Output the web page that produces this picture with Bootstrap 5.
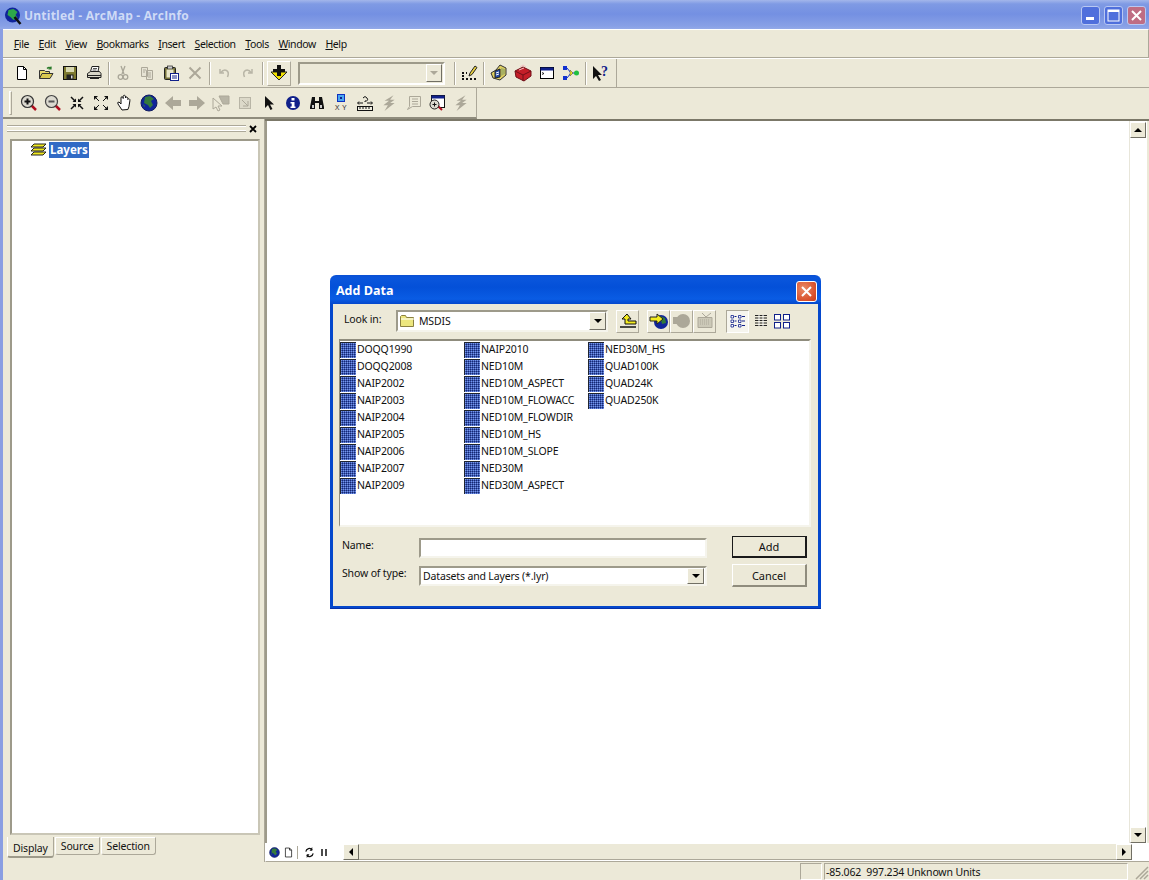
<!DOCTYPE html>
<html lang="en">
<head>
<meta charset="UTF-8">
<title>Untitled - ArcMap - ArcInfo</title>
<link rel="stylesheet" href="https://cdn.jsdelivr.net/npm/bootstrap@5.3.2/dist/css/bootstrap.min.css">
<style>
html, body { height: 880px; overflow: hidden; }
body { margin: 0; background: #ece9d8; color: #111; font-family: "Noto Sans", "Liberation Sans", sans-serif; font-size: 10.5px; letter-spacing: -.15px; line-height: 1; }
svg { display: block; }
.app { width: 1149px; height: 880px; position: relative; }

.titlebar { height: 29px; padding: 2px 3px 0 4px; background: linear-gradient(#a3b6ea 0, #7f9ae4 4px, #7490e2 14px, #88a0e6 26px, #93a9e8 29px); }
.app-title { color: #cfdbf6; font-family: "Open Sans", "Liberation Sans", sans-serif; font-weight: 700; font-size: 12px; letter-spacing: .2px; margin-left: 2px; white-space: nowrap; }
.win-btn { width: 19px; height: 19px; margin-left: 4px; border: 1px solid #b9c8f2; border-radius: 3px; background: #4f6fdc; }
.win-btn.close-btn { background: #bf6d84; }

.frame { height: 851px; border-left: 3px solid #8a9ee2; background: #ece9d8; }
.menubar { height: 29px; padding: 2px 0 0 6px; border-top: 1px solid #fff; border-bottom: 1px solid #aca899; border-right: 1px solid #aca899; }
.menubar .nav-link { color: #111; padding: 0 4.8px; font-size: 10.5px; letter-spacing: -.4px; white-space: nowrap; }
.toolbar { height: 30px; border-top: 1px solid #fff; border-bottom: 1px solid #aca899; }
.tb-first { width: 614px; border-right: 1px solid #aca899; padding-left: 7px; }
.tb-second { height: 31px; width: 474px; border-right: 1px solid #aca899; padding-left: 3px; border-bottom: 2px solid #8f8c7d; }
.grip { width: 3px; height: 24px; border: 1px solid #fff; border-right-color: #aca899; border-bottom-color: #aca899; }
.grip-wide { margin-left: 3px; margin-right: 5px; }
.tool { width: 24px; height: 24px; flex: none; }
.tool-raised { width: 24px; height: 25px; flex: none; margin-left: 2px; border: 1px solid #fff; border-right-color: #aca899; border-bottom-color: #aca899; }
.xy-label { font-size: 7.5px; letter-spacing: .5px; margin-top: 2px; color: #333; }
.sep { width: 1px; height: 23px; flex: none; background: #aca899; box-shadow: 1px 0 #fff; margin: 0 2px; }
.sep.sep-wide { margin-right: 3px; }
.combo { width: 147px; height: 23px; border: 2px solid #9d9a8a; border-right-color: #fff; border-bottom-color: #fff; background: #ece9d8; margin: 0 7px; flex: none; }
.arrow-btn { background: #ece9d8; border: 1px solid #fff; border-right-color: #716f64; border-bottom-color: #716f64; flex: none; }
.combo .arrow-btn { width: 16px; height: 18px; margin: 1px; }
.arrow-down { width: 0; height: 0; border-left: 4px solid transparent; border-right: 4px solid transparent; border-top: 4px solid #000; }
.arrow-down.off { border-top-color: #aca899; }
.arrow-up { width: 0; height: 0; border-left: 4px solid transparent; border-right: 4px solid transparent; border-bottom: 4px solid #000; }
.arrow-left { width: 0; height: 0; border-top: 4px solid transparent; border-bottom: 4px solid transparent; border-right: 4px solid #000; }
.arrow-right { width: 0; height: 0; border-top: 4px solid transparent; border-bottom: 4px solid transparent; border-left: 4px solid #000; }

.main { height: 743px; }
.toc { width: 262px; flex: none; border-right: 1px solid #aca899; padding: 4px 4px 0 7px; }
.toc-head { height: 11px; }
.toc-grips { height: 7px; border-top: 1px solid #aca899; border-bottom: 1px solid #aca899; box-shadow: inset 0 1px #fff, inset 0 -1px #fff; margin-left: -3px; }
.toc-x { width: 14px; flex: none; }
.toc-tree { height: 696px; margin-top: 5px; background: #fff; border: 2px solid #9d9a8a; border-right-color: #c9c6b6; border-bottom-color: #c9c6b6; padding: 1px 0 0 18px; }
.toc-sel { background: #316ac5; color: #fff; font-weight: 700; padding: 2px 1px; font-size: 11.5px; letter-spacing: 0; margin-left: 1px; }
.toc-tab { border: 1px solid #aca899; border-top-color: #fff; border-left-color: #fff; border-radius: 0 0 3px 3px; padding: 3px 5px 4px; height: 18px; margin-right: 1px; white-space: nowrap; background: #ece9d8; }
.toc-tab.on { height: 21px; padding: 6px 5px 4px; border-top: 0; border-bottom: 2px solid #9d9a8a; }
.toc-tabs { margin: 2px 0 0 -3px; }

.mapwrap { width: 884px; flex: none; }
.mapview { height: 724px; border-top: 2px solid #7b7868; }
.map { width: 864px; background: #fff; border-left: 2px solid #9d9a8a; }
.vscroll { width: 18px; background: #fff; border-left: 1px solid #e8e6da; padding-top: 1px; }
.sbtn { width: 16px; height: 16px; background: #ece9d8; border: 1px solid #fff; border-right-color: #716f64; border-bottom-color: #716f64; flex: none; }
.vspace { flex: 1; }
.mapbottom { height: 19px; background: #fff; border-left: 1px solid #fff; border-bottom: 1px solid #aca899; }
.viewicons { width: 77px; padding-left: 3px; flex: none; }
.viewicons svg { flex: none; }
.viewicons .sep { height: 13px; margin: 0 6px 0 3px; }
.view-gap { margin-left: 3px; }
.view-pause { margin-left: 5px; }
.hthumb { flex: 1; height: 16px; background: #ece9d8; border-bottom: 1px solid #aca899; }
.hcorner { width: 17px; flex: none; }

.statusbar { height: 18px; }
.st-cell { height: 17px; border: 1px solid #aca899; border-right-color: #fff; border-bottom-color: #fff; margin-right: 2px; white-space: nowrap; }
.st-empty { width: 22px; }
.st-coord { width: 304px; padding: 2px 0 0 1px; }
.sizer { width: 19px; height: 17px; flex: none; }

.dlg { position: absolute; left: 330px; top: 275px; width: 491px; height: 334px; border-radius: 6px 6px 0 0; background: linear-gradient(#0a50d4 0, #0a56dc 3px, #0450d8 12px, #0a5ce4 24px, #0548cc 29px); padding: 0 3px 3px; box-shadow: inset 0 -1px #0831a9; }
.dlg-title { height: 29px; padding: 3px 1px 0 3px; }
.dlg-name { color: #fff; font-weight: 700; font-size: 12.5px; letter-spacing: 0; margin-top: 1px; font-family: "Open Sans", "Liberation Sans", sans-serif; }
.dlg-close { width: 21px; height: 21px; border: 1px solid #fff; border-radius: 3px; background: radial-gradient(circle at 35% 35%, #ea8a66, #d8502c 70%, #c63e1c); }
.dlg-body { height: 302px; background: #ece9d8; padding: 5px 7px 0 6px; }
.look-row { height: 24px; }
.look-label { width: 57px; padding: 0 0 3px 5px; flex: none; }
.look-combo { width: 212px; height: 22px; background: #fff; border: 2px solid #9d9a8a; border-right-color: #f5f4ec; border-bottom-color: #f5f4ec; padding-left: 1px; flex: none; }
.look-combo .arrow-btn, .type-combo .arrow-btn { width: 17px; height: 18px; margin-left: auto; }
.dlg-tool { width: 23px; height: 23px; flex: none; border: 1px solid #fff; border-right-color: #aca899; border-bottom-color: #aca899; }
.dlg-tool.flat { border-color: transparent; }
.dlg-tool.on { background: #f6f5ee; border-color: #aca899 #fff #fff #aca899; margin-left: 10px; }
.dlg-tool.last { margin-left: -2px; }
.files { height: 188px; margin-top: 6px; background: #fff; border: 2px solid #8f8c7d; border-left-width: 1px; border-right-color: #f5f4ec; border-bottom-color: #f5f4ec; }
.file-col { width: 124px; flex: none; }
.file-item { height: 17px; white-space: nowrap; }
.file-item svg { margin-right: 1px; flex: none; }
.form-row-xp { height: 20px; }
.form-label-xp { width: 80px; flex: none; margin: 0 0 6px; padding-left: 3px; }
.dlg-body .form-control { width: 288px; height: 20px; flex: none; min-height: 0; padding: 0; background: #fff; border-radius: 0; border: 2px solid #9d9a8a; border-right-color: #f5f4ec; border-bottom-color: #f5f4ec; }
.type-combo { width: 288px; height: 20px; background: #fff; border: 2px solid #9d9a8a; border-right-color: #f5f4ec; border-bottom-color: #f5f4ec; padding-left: 2px; flex: none; white-space: nowrap; }
.type-combo .arrow-btn { height: 16px; margin-right: 1px; }
.dlg .btn { width: 75px; padding: 0; font-size: 11px; letter-spacing: 0; font-family: "Noto Sans", "Liberation Sans", sans-serif; color: #111; background: #ece9d8; border-radius: 0; line-height: 1; }
.btn-def { height: 22px; border: 2px solid #1a1a1a; border-top-width: 1px; border-left-width: 1px; }
.btn-xp { height: 23px; border: 1px solid #fff; border-right: 2px solid #8f8c7d; border-bottom: 2px solid #8f8c7d; }
.lower { margin-top: 9px; }
.lower-left { width: 390px; flex: none; padding-top: 2px; }
.lower-right { gap: 6px; margin-right: 4px; }
</style>
</head>
<body>

<svg width="0" height="0" class="position-absolute">
  <defs>
    <pattern id="rasterDots" width="2" height="2" patternUnits="userSpaceOnUse">
      <rect width="2" height="2" fill="#3a58b8"/><rect width="1" height="1" fill="#1a2a6c"/><rect x="1" y="1" width="1" height="1" fill="#7a98e4"/>
    </pattern>
    <symbol id="i-raster" viewBox="0 0 16 16"><rect width="16" height="16" fill="url(#rasterDots)"/><path d="M.5 16V.5H16" fill="none" stroke="#20242e"/></symbol>
    <symbol id="i-new" viewBox="0 0 16 16"><path d="M3.500 1.500h6l3 3v10h-9z" fill="#fff" stroke="#000"/><path d="M9.500 1.500v3h3" fill="none" stroke="#000"/></symbol>
    <symbol id="i-open" viewBox="0 0 16 16"><path d="M1.500 13.500v-8h5l1 1h4v2" fill="#e6d96a" stroke="#333"/><path d="M1.500 13.500l2.500-5h11l-3 5z" fill="#d8c850" stroke="#333"/><path d="M9 3.500q2-2 4 0M13 1.500v2.500h-2.500" fill="none" stroke="#2a7a2a" stroke-width="1.200"/></symbol>
    <symbol id="i-save" viewBox="0 0 16 16"><rect x="1.500" y="1.500" width="13" height="13" fill="#7e7a30" stroke="#111"/><rect x="4" y="2" width="8" height="5" fill="#d8d8b0"/><rect x="4.500" y="9.500" width="7" height="5" fill="#222"/><rect x="9" y="10.500" width="1.500" height="3" fill="#ddd"/></symbol>
    <symbol id="i-print" viewBox="0 0 16 16"><path d="M4.500 6.500l1.500-5h7l-1 5" fill="#fff" stroke="#222"/><path d="M1.500 8.500l3-2h9l1.500 2v4h-13.500z" fill="#d8d6c8" stroke="#222"/><path d="M2 10.500h13M4 13.500h9" stroke="#222"/><path d="M7 3.500h4M6.500 5h4" stroke="#555"/></symbol>
    <symbol id="i-cut" viewBox="0 0 16 16"><path d="M6 1l3 8M10 1l-3 8" stroke="#a9a698" fill="none" stroke-width="1.300"/><circle cx="5.500" cy="12" r="2.300" fill="none" stroke="#a9a698" stroke-width="1.300"/><circle cx="10.500" cy="12" r="2.300" fill="none" stroke="#a9a698" stroke-width="1.300"/></symbol>
    <symbol id="i-copy" viewBox="0 0 16 16"><path d="M2.500 2.500h6v9h-6zM7.500 5.500h6v9h-6z" fill="#e6e3d4" stroke="#aca899"/><path d="M9 8h3M9 10h3M9 12h3M4 5h3M4 7h2" stroke="#aca899"/></symbol>
    <symbol id="i-paste" viewBox="0 0 16 16"><rect x="1.500" y="2.500" width="11" height="12" rx="1" fill="#75713a" stroke="#222"/><rect x="4.500" y="1" width="5" height="3" fill="#ccc" stroke="#222" stroke-width=".7"/><rect x="3.500" y="4.500" width="7" height="8" fill="#e8e6c8"/><rect x="7.500" y="8.500" width="8" height="7" fill="#fff" stroke="#10208a"/><path d="M9 11h5M9 13h5" stroke="#10208a"/></symbol>
    <symbol id="i-del" viewBox="0 0 16 16"><path d="M2.500 2.500l11 11M13.500 2.500l-11 11" stroke="#aca899" stroke-width="2"/></symbol>
    <symbol id="i-undo" viewBox="0 0 16 16"><path d="M4 4v4h4M4.500 8q3-4 6-2.500t1 6.500" fill="none" stroke="#b8b5a6" stroke-width="1.500"/></symbol>
    <symbol id="i-redo" viewBox="0 0 16 16"><path d="M12 4v4h-4M11.500 8q-3-4-6-2.500t-1 6.500" fill="none" stroke="#b8b5a6" stroke-width="1.500"/></symbol>
    <symbol id="i-add" viewBox="0 0 18 18"><path d="M1 8h16l-8 8z" fill="#f2e200" stroke="#222"/><path d="M7 1h4v4h4v3h-4v4h-4v-4h-4v-3h4z" fill="#111"/></symbol>
    <symbol id="i-edit" viewBox="0 0 18 18"><path d="M9 12l1-3 5-7 2 1.500-5 7z" fill="#e8d040" stroke="#222"/><path d="M2 9h2M6 9h1M2 15h14M3 11v3" stroke="#111" stroke-width="2" stroke-dasharray="2 2"/></symbol>
    <symbol id="i-catalog" viewBox="0 0 18 18"><path d="M1 9l5-3 4-5 6 3v7l-6 5-7-2z" fill="#e0d060" stroke="#333"/><path d="M5 7l5-2v8l-5 1z" fill="#2850a8" stroke="#222"/><path d="M11 4l4 1v5l-4 2z" fill="#a8b060"/><path d="M6 9l3-1M6 11l3-1" stroke="#fff"/></symbol>
    <symbol id="i-toolbox" viewBox="0 0 18 18"><path d="M1 7l8-4 8 4v5l-7 5-8-4z" fill="#c41e28" stroke="#701018"/><path d="M1 7l8 4 8-4M9 11v6" stroke="#701018" fill="none"/><path d="M5 6l5-2M6 3l3-2 3 2" stroke="#f2c0c0" fill="none"/></symbol>
    <symbol id="i-window" viewBox="0 0 16 16"><rect x="1.500" y="2.500" width="13" height="11" fill="#fff" stroke="#000"/><rect x="1.500" y="2.500" width="13" height="3" fill="#10208a"/><path d="M3 7.500l2 1-2 1" fill="none" stroke="#000" stroke-width=".8"/></symbol>
    <symbol id="i-model" viewBox="0 0 18 18"><rect x="1" y="2" width="4" height="4" fill="#1030d0"/><rect x="1" y="12" width="4" height="4" fill="#1030d0"/><path d="M5 4l4 5M5 14l4-5M9 9h4" stroke="#1030d0"/><path d="M8 6l3 3-3 3z" fill="#f0e020" stroke="#444" stroke-width=".5"/><circle cx="14.500" cy="9" r="2.500" fill="#20c040"/></symbol>
    <symbol id="i-whats" viewBox="0 0 18 18"><path d="M1 2v13l3-3 3 5 2-1-3-5h4z" fill="#111"/><text x="9" y="12" font-family="Liberation Serif, serif" font-weight="700" font-size="14" fill="#10208a">?</text></symbol>
    <symbol id="i-zin" viewBox="0 0 18 18"><path d="M11 11l5 5" stroke="#b01020" stroke-width="2.500"/><circle cx="7.500" cy="7.500" r="6" fill="#dcdad0" stroke="#333" stroke-width="1.200"/><path d="M4.500 7.500h6M7.500 4.500v6" stroke="#111" stroke-width="2"/></symbol>
    <symbol id="i-zout" viewBox="0 0 18 18"><path d="M11 11l5 5" stroke="#b01020" stroke-width="2.500"/><circle cx="7.500" cy="7.500" r="6" fill="#dcdad0" stroke="#444" stroke-width="1.200"/><path d="M4.500 7.500h6" stroke="#555" stroke-width="2"/></symbol>
    <symbol id="i-fin" viewBox="0 0 16 16"><path d="M2 2l4 4M14 2l-4 4M2 14l4-4M14 14l-4-4" stroke="#111" stroke-width="1.500"/><path d="M7 7H3.500L7 3.500zM9 7h3.500L9 3.500zM7 9H3.500L7 12.500zM9 9h3.500L9 12.500z" fill="#111"/></symbol>
    <symbol id="i-fout" viewBox="0 0 16 16"><path d="M1 1h4L1 5zM15 1h-4l4 4zM1 15h4l-4-4zM15 15h-4l4-4z" fill="#111"/><path d="M3 3l3 3M13 3l-3 3M3 13l3-3M13 13l-3-3" stroke="#111"/></symbol>
    <symbol id="i-hand" viewBox="0 0 18 18"><path d="M6 16l-4-6q-1-2 1-2l2 2V4q0-1.500 1.200-1.200 1 .2 1 1.700V2.500q.2-1.500 1.300-1.200 1 .2 1 1.700v1q.3-1.300 1.300-1 1 .3 1 1.500v1q.5-1 1.300-.7 1 .4.800 2l-1 6-1 2.700z" fill="#fff" stroke="#111"/></symbol>
    <symbol id="i-globe" viewBox="0 0 18 18"><circle cx="9" cy="9" r="8" fill="#10249a"/><path d="M5 3l5-1 4 3-3 2 2 4-3 3-2-3-4-2z" fill="#357a3c"/><path d="M3 10l2 2-1 1z" fill="#357a3c"/><circle cx="9" cy="9" r="8" fill="none" stroke="#101c60"/></symbol>
    <symbol id="i-back" viewBox="0 0 18 18"><path d="M1 9l8-7v4h8v6H9v4z" fill="#aca899"/></symbol>
    <symbol id="i-fwd" viewBox="0 0 18 18"><path d="M17 9l-8-7v4H1v6h8v4z" fill="#aca899"/></symbol>
    <symbol id="i-selfeat" viewBox="0 0 18 18"><path d="M7 2h10v8H11z" fill="#b8b5a6" stroke="#aca899"/><path d="M1 4v11l3-2 2 4 2-1-2-4h4z" fill="#ece9d8" stroke="#aca899"/></symbol>
    <symbol id="i-clear" viewBox="0 0 16 16"><rect x="2.500" y="2.500" width="11" height="11" fill="#dcd9c9" stroke="#b8b5a6"/><path d="M5 5l6 6M11 6v5h-5" fill="none" stroke="#aca899"/></symbol>
    <symbol id="i-arrow" viewBox="0 0 16 16"><path d="M4 1v12l3-3 2.500 5 2-1-2.500-4.500h4z" fill="#111"/></symbol>
    <symbol id="i-info" viewBox="0 0 16 16"><circle cx="8" cy="8" r="7" fill="#10208a"/><rect x="6.500" y="3" width="3" height="2.500" fill="#fff"/><path d="M5.500 7h4v4.500h1v1.500h-5v-1.500h1.200v-3h-1.200z" fill="#fff"/></symbol>
    <symbol id="i-find" viewBox="0 0 16 16"><path d="M3 2h3v4h4V2h3l2 10v2H10V8H6v6H1v-2z" fill="#111"/><rect x="3" y="10" width="2" height="3" fill="#ccc"/><rect x="11" y="10" width="2" height="3" fill="#ccc"/></symbol>
    <symbol id="i-measure" viewBox="0 0 18 18"><rect x="1.500" y="12.500" width="15" height="4" fill="#f0eee0" stroke="#111"/><path d="M4 13v2M7 13v2M10 13v2M13 13v2M2 9h5M16 9h-5M3 7.500L1.500 9 3 10.500M15 7.500L16.500 9 15 10.500" stroke="#111" fill="none"/><path d="M7 4q2-3 4 0t-2 3v1" fill="none" stroke="#111"/></symbol>
    <symbol id="i-bolt" viewBox="0 0 16 16"><path d="M12 1L4 6h4L3 10h4l-3 5 9-7H9l4-3H9z" fill="#aca899"/></symbol>
    <symbol id="i-note" viewBox="0 0 18 18"><path d="M5.500 2.500h11v10h-8l-5 3 2-3z" fill="#ece9d8" stroke="#aca899"/><path d="M8 5h6M8 7.500h6M8 10h6" stroke="#aca899"/></symbol>
    <symbol id="i-viewer" viewBox="0 0 18 18"><rect x="3.500" y="1.500" width="13" height="12" fill="#fff" stroke="#111"/><rect x="3.500" y="1.500" width="13" height="3" fill="#10208a"/><path d="M9 11l5 5" stroke="#b01020" stroke-width="2"/><circle cx="6.500" cy="10.500" r="4.500" fill="#dcdad0" stroke="#222"/><path d="M4.500 10.500h4M6.500 8.500v4" stroke="#111"/></symbol>
    <symbol id="i-layers" viewBox="0 0 18 14"><path d="M4 1h12l-3 3H1zM4 5h12l-3 3H1zM4 9h12l-3 3H1z" fill="#f0e820" stroke="#222"/></symbol>
    <symbol id="i-folder" viewBox="0 0 16 16"><path d="M1.500 13.500v-10l1-1h4l1 2h7v9z" fill="#ece67e" stroke="#8a8040"/><path d="M2 6h13" stroke="#fff"/></symbol>
    <symbol id="i-up" viewBox="0 0 18 18"><path d="M8 2L3 7h3v5h11v-3H9V7h3z" fill="#f4ec20" stroke="#111"/><path d="M1 15h16" stroke="#111" stroke-width="1.500"/></symbol>
    <symbol id="i-connect" viewBox="0 0 20 18"><circle cx="12" cy="10" r="7" fill="#10249a"/><path d="M11 4l5 2 1 5-4 1z" fill="#2f7a3a"/><path d="M1 5h7V2l6 5-6 5V9H1z" fill="#f4ec20" stroke="#222"/></symbol>
    <symbol id="i-disc" viewBox="0 0 20 18"><circle cx="11" cy="9" r="7" fill="#aca899"/><rect x="1" y="5" width="7" height="7" fill="#aca899"/></symbol>
    <symbol id="i-dbconn" viewBox="0 0 20 18"><path d="M3 5.500h14v10H3z" fill="#ccc9b8" stroke="#aca899"/><path d="M7 1l4 4 5-4" stroke="#aca899" fill="none"/><path d="M5 8h10M5 10h10M5 12h10" stroke="#aca899" stroke-dasharray="1 1"/></symbol>
    <symbol id="i-list" viewBox="0 0 18 18"><path d="M2 3.500h2.500v2.500H2zM2 8h2.500v2.500H2zM2 12.500h2.500V15H2zM9.500 3.500H12v2.500H9.500zM9.500 8H12v2.500H9.500zM9.500 12.500H12V15H9.500z" fill="#fff" stroke="#10208a" stroke-width=".8"/><path d="M5.500 4.500h2M5.500 9h2M5.500 13.500h2M13 4.500h3M13 9h3M13 13.500h3" stroke="#10208a"/></symbol>
    <symbol id="i-details" viewBox="0 0 18 18"><path d="M3 3.500h12M3 6h12M3 8.500h12M3 11h12M3 13.500h12" stroke="#222"/><path d="M7 3v11M11 3v11" stroke="#fff"/></symbol>
    <symbol id="i-thumbs" viewBox="0 0 18 18"><rect x="1.500" y="2.500" width="6" height="5.500" fill="#fff" stroke="#10208a"/><rect x="10.500" y="2.500" width="6" height="5.500" fill="#fff" stroke="#10208a"/><rect x="1.500" y="10.500" width="6" height="5.500" fill="#fff" stroke="#10208a"/><rect x="10.500" y="10.500" width="6" height="5.500" fill="#fff" stroke="#10208a"/></symbol>
    <symbol id="i-refresh" viewBox="0 0 12 12"><path d="M2 5a4 4 0 0 1 7-2M10 7a4 4 0 0 1-7 2" fill="none" stroke="#111" stroke-width="1.300"/><path d="M9 0v4H6M3 12V8h3" fill="#111"/></symbol>
  </defs>
</svg>

<div class="app">
  <div class="titlebar d-flex align-items-center">
    <svg width="18" height="18" viewBox="0 0 17 18"><circle cx="8" cy="8" r="7.500" fill="#10249a"/><path d="M4 3l5-1 4 3-2 3 2 3-4 2-3-3-3-2z" fill="#2ea84a"/><path d="M10 10l6 7" stroke="#111" stroke-width="2.500"/></svg>
    <span class="app-title">Untitled - ArcMap - ArcInfo</span>
    <div class="ms-auto d-flex">
      <div class="win-btn d-flex align-items-end justify-content-center pb-1"><svg width="9" height="3"><rect width="8" height="3" fill="#fff"/></svg></div>
      <div class="win-btn d-flex align-items-center justify-content-center"><svg width="13" height="13"><rect x="1" y="1" width="11" height="11" fill="none" stroke="#fff"/><rect x="1" y="1" width="11" height="2" fill="#fff"/></svg></div>
      <div class="win-btn close-btn d-flex align-items-center justify-content-center"><svg width="13" height="13"><path d="M2 2l9 9M11 2l-9 9" stroke="#fff" stroke-width="2"/></svg></div>
    </div>
  </div>

  <div class="frame">
    <div class="menubar d-flex align-items-center">
      <nav class="nav flex-nowrap">
        <a class="nav-link" href="#"><u>F</u>ile</a>
        <a class="nav-link" href="#"><u>E</u>dit</a>
        <a class="nav-link" href="#"><u>V</u>iew</a>
        <a class="nav-link" href="#"><u>B</u>ookmarks</a>
        <a class="nav-link" href="#"><u>I</u>nsert</a>
        <a class="nav-link" href="#"><u>S</u>election</a>
        <a class="nav-link" href="#"><u>T</u>ools</a>
        <a class="nav-link" href="#"><u>W</u>indow</a>
        <a class="nav-link" href="#"><u>H</u>elp</a>
      </nav>
    </div>

    <div class="toolbar"><div class="tb-first d-flex align-items-center h-100" id="tb1"></div></div>
    <div class="tb-second d-flex align-items-center" id="tb2"></div>

    <div class="main d-flex">
      <div class="toc d-flex flex-column">
        <div class="toc-head d-flex align-items-center">
          <div class="toc-grips flex-grow-1"></div>
          <div class="toc-x d-flex justify-content-center"><svg width="8" height="8"><path d="M1 1l6 6M7 1l-6 6" stroke="#000" stroke-width="1.800"/></svg></div>
        </div>
        <div class="toc-tree">
          <div class="d-flex align-items-center">
            <svg width="18" height="14"><use href="#i-layers"/></svg>
            <span class="toc-sel">Layers</span>
          </div>
        </div>
        <div class="toc-tabs d-flex align-items-start">
          <div class="toc-tab on">Display</div>
          <div class="toc-tab">Source</div>
          <div class="toc-tab">Selection</div>
        </div>
      </div>

      <div class="mapwrap d-flex flex-column">
        <div class="mapview d-flex">
          <div class="map"></div>
          <div class="vscroll d-flex flex-column">
            <div class="sbtn d-flex align-items-center justify-content-center"><div class="arrow-up"></div></div>
            <div class="vspace"></div>
            <div class="sbtn d-flex align-items-center justify-content-center"><div class="arrow-down"></div></div>
          </div>
        </div>
        <div class="mapbottom d-flex align-items-center">
          <div class="viewicons d-flex align-items-center">
            <svg width="11" height="11"><use href="#i-globe"/></svg>
            <svg width="11" height="11" class="view-gap"><use href="#i-new"/></svg>
            <div class="sep"></div>
            <svg width="11" height="11"><use href="#i-refresh"/></svg>
            <svg width="9" height="9" class="view-pause"><path d="M2 1v7M6 1v7" stroke="#111" stroke-width="1.500"/></svg>
          </div>
          <div class="sbtn d-flex align-items-center justify-content-center"><div class="arrow-left"></div></div>
          <div class="hthumb"></div>
          <div class="sbtn d-flex align-items-center justify-content-center"><div class="arrow-right"></div></div>
          <div class="hcorner"></div>
        </div>
      </div>
    </div>

    <div class="statusbar d-flex justify-content-end align-items-end">
      <div class="st-cell st-empty"></div>
      <div class="st-cell st-coord d-flex align-items-center">-85.062&nbsp; 997.234 Unknown Units</div>
      <svg class="sizer" viewBox="0 0 19 17"><path d="M18 4L6 16M18 8l-8 8M18 12l-4 4" stroke="#aca899" stroke-width="1.500"/></svg>
    </div>
  </div>

  <div class="dlg" role="dialog">
    <div class="dlg-title d-flex align-items-center justify-content-between">
      <span class="dlg-name">Add Data</span>
      <div class="dlg-close d-flex align-items-center justify-content-center"><svg width="13" height="13"><path d="M2 2l9 9M11 2l-9 9" stroke="#fff" stroke-width="2"/></svg></div>
    </div>
    <div class="dlg-body">
      <div class="look-row d-flex align-items-center">
        <div class="look-label">Look in:</div>
        <div class="look-combo d-flex align-items-center">
          <svg width="16" height="16"><use href="#i-folder"/></svg>
          <span class="ms-1">MSDIS</span>
          <div class="arrow-btn d-flex align-items-center justify-content-center"><div class="arrow-down"></div></div>
        </div>
        <div class="dlg-tool d-flex align-items-center justify-content-center ms-2"><svg width="18" height="18"><use href="#i-up"/></svg></div>
        <div class="dlg-tool d-flex align-items-center justify-content-center ms-2"><svg width="20" height="18"><use href="#i-connect"/></svg></div>
        <div class="dlg-tool d-flex align-items-center justify-content-center"><svg width="20" height="18"><use href="#i-disc"/></svg></div>
        <div class="dlg-tool d-flex align-items-center justify-content-center"><svg width="20" height="18"><use href="#i-dbconn"/></svg></div>
        <div class="dlg-tool d-flex align-items-center justify-content-center on"><svg width="18" height="18"><use href="#i-list"/></svg></div>
        <div class="dlg-tool flat d-flex align-items-center justify-content-center"><svg width="18" height="18"><use href="#i-details"/></svg></div>
        <div class="dlg-tool flat last d-flex align-items-center justify-content-center"><svg width="18" height="18"><use href="#i-thumbs"/></svg></div>
      </div>

      <div class="files d-flex" id="files"></div>

      <div class="lower d-flex">
        <div class="lower-left d-flex flex-column gap-2">
          <div class="form-row-xp d-flex align-items-center">
            <label class="form-label-xp" for="nameInput">Name:</label>
            <input class="form-control" id="nameInput" type="text">
          </div>
          <div class="form-row-xp d-flex align-items-center">
            <label class="form-label-xp">Show of type:</label>
            <div class="type-combo d-flex align-items-center">
              Datasets and Layers (*.lyr)
              <div class="arrow-btn d-flex align-items-center justify-content-center"><div class="arrow-down"></div></div>
            </div>
          </div>
        </div>
        <div class="lower-right d-flex flex-column ms-auto">
          <button class="btn btn-def" type="button">Add</button>
          <button class="btn btn-xp" type="button">Cancel</button>
        </div>
      </div>
    </div>
  </div>
</div>

<script>
var bar1 = ["new", "open", "save", "print", "|", "cut", "copy", "paste", "del", "|", "undo", "redo", "|", "+add", "combo", "|", "edit", "||", "catalog", "toolbox", "window", "model", "||", "whats"];
var bar2 = ["grip", "zin", "zout", "fin", "fout", "hand", "globe", "back", "fwd", "selfeat", "clear", "arrow", "info", "find", "xy", "measure", "bolt", "note", "viewer", "bolt"];
var wide = { add: 1, edit: 1, catalog: 1, toolbox: 1, model: 1, whats: 1, zin: 1, zout: 1, hand: 1, globe: 1, back: 1, fwd: 1, selfeat: 1, measure: 1, bolt: 1, note: 1, viewer: 1 };

function toolHtml(name) {
    if (name === "grip") return '<div class="grip grip-wide"></div>';
    if (name === "|") return '<div class="sep"></div>';
    if (name === "||") return '<div class="sep sep-wide"></div>';
    if (name === "combo") return '<div class="combo d-flex align-items-center justify-content-end"><div class="arrow-btn d-flex align-items-center justify-content-center"><div class="arrow-down off"></div></div></div>';
    if (name === "xy") return '<div class="tool d-flex flex-column align-items-center justify-content-center"><svg width="8" height="8"><rect x=".5" y=".5" width="7" height="7" fill="#4aa8f0" stroke="#1030c0"/><rect x="3" y="3" width="2" height="2" fill="#10208a"/></svg><span class="xy-label">X Y</span></div>';
    var raised = name.charAt(0) === "+";
    if (raised) name = name.substring(1);
    var size = wide[name] ? 18 : 16;
    return '<div class="' + (raised ? "tool-raised" : "tool") + ' d-flex align-items-center justify-content-center"><svg width="' + size + '" height="' + size + '"><use href="#i-' + name + '"/></svg></div>';
}
document.getElementById("tb1").innerHTML = bar1.map(toolHtml).join("");
document.getElementById("tb2").innerHTML = bar2.map(toolHtml).join("");

var columns = [
    ["DOQQ1990", "DOQQ2008", "NAIP2002", "NAIP2003", "NAIP2004", "NAIP2005", "NAIP2006", "NAIP2007", "NAIP2009"],
    ["NAIP2010", "NED10M", "NED10M_ASPECT", "NED10M_FLOWACC", "NED10M_FLOWDIR", "NED10M_HS", "NED10M_SLOPE", "NED30M", "NED30M_ASPECT"],
    ["NED30M_HS", "QUAD100K", "QUAD24K", "QUAD250K"]
];
document.getElementById("files").innerHTML = columns.map(function (col) {
    return '<div class="file-col">' + col.map(function (f) {
        return '<div class="file-item d-flex align-items-center"><svg width="16" height="16"><use href="#i-raster"/></svg>' + f + '</div>';
    }).join("") + '</div>';
}).join("");
</script>
<script src="https://cdn.jsdelivr.net/npm/bootstrap@5.3.2/dist/js/bootstrap.bundle.min.js"></script>
</body>
</html>
